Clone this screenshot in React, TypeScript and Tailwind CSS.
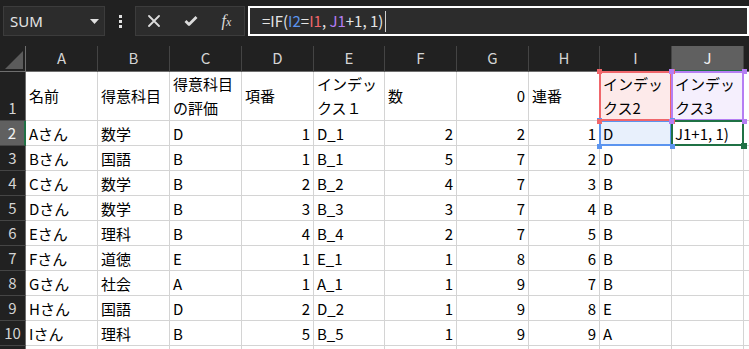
import React from 'react';

const widths = ['w-[72px]', 'w-[72px]', 'w-[72px]', 'w-[72px]', 'w-[71px]', 'w-[72px]', 'w-[72px]', 'w-[71px]', 'w-[72px]', 'w-[72px]'];
const letters = ['A', 'B', 'C', 'D', 'E', 'F', 'G', 'H', 'I', 'J'];

type Val = string | number;

const rows: Val[][] = [
  ['Aさん', '数学', 'D', 1, 'D_1', 2, 2, 1, 'D', 'J1+1, 1)'],
  ['Bさん', '国語', 'B', 1, 'B_1', 5, 7, 2, 'D', ''],
  ['Cさん', '数学', 'B', 2, 'B_2', 4, 7, 3, 'B', ''],
  ['Dさん', '数学', 'B', 3, 'B_3', 3, 7, 4, 'B', ''],
  ['Eさん', '理科', 'B', 4, 'B_4', 2, 7, 5, 'B', ''],
  ['Fさん', '道徳', 'E', 1, 'E_1', 1, 8, 6, 'B', ''],
  ['Gさん', '社会', 'A', 1, 'A_1', 1, 9, 7, 'B', ''],
  ['Hさん', '国語', 'D', 2, 'D_2', 1, 9, 8, 'E', ''],
  ['Iさん', '理科', 'B', 5, 'B_5', 1, 9, 9, 'A', ''],
  ['', '', '', '', '', '', '', '', '', ''],
];

// row 1 headers, wrapped by hand the way Excel wraps them
const head: { lines: string[]; right?: boolean }[] = [
  { lines: ['名前'] },
  { lines: ['得意科目'] },
  { lines: ['得意科目', 'の評価'] },
  { lines: ['項番'] },
  { lines: ['インデッ', 'クス１'] },
  { lines: ['数'] },
  { lines: ['0'], right: true },
  { lines: ['連番'] },
  { lines: ['インデッ', 'クス2'] },
  { lines: ['インデッ', 'クス3'] },
];

type Ref = { bg: string; line: string; dot: string; lz: string; dz: string; dots: boolean };

const refs: Record<string, Ref> = {
  I1: { bg: 'bg-[#fdeaea]', line: 'border-[#f0666b]', dot: 'bg-[#f0666b]', lz: 'z-[6]', dz: 'z-[12]', dots: true },
  J1: { bg: 'bg-[#f5effd]', line: 'border-[#b57ef3]', dot: 'bg-[#b57ef3]', lz: 'z-[7]', dz: 'z-[13]', dots: true },
  I2: { bg: 'bg-[#e8f0fc]', line: 'border-[#5b94ef]', dot: 'bg-[#5b94ef]', lz: 'z-[5]', dz: 'z-[11]', dots: true },
  J2: { bg: 'bg-white', line: 'border-[#1f7145]', dot: 'bg-[#1f7145]', lz: 'z-[8]', dz: 'z-[14]', dots: false },
};

const Mark: React.FC<{ r: Ref }> = ({ r }) => (
  <>
    <span className={`pointer-events-none absolute -left-px -top-px -right-px -bottom-px border-2 ${r.line} ${r.lz}`} />
    {r.dots ? (
      <>
        <span className={`absolute -left-[3px] -top-[3px] h-[5px] w-[5px] ${r.dot} ${r.dz}`} />
        <span className={`absolute -right-[4px] -top-[3px] h-[5px] w-[5px] ${r.dot} ${r.dz}`} />
        <span className={`absolute -left-[3px] -bottom-[4px] h-[5px] w-[5px] ${r.dot} ${r.dz}`} />
        <span className={`absolute -right-[4px] -bottom-[4px] h-[5px] w-[5px] ${r.dot} ${r.dz}`} />
      </>
    ) : (
      <span className={`absolute -right-[4px] -bottom-[4px] h-[6px] w-[6px] ${r.dot} ${r.dz}`} />
    )}
  </>
);

const ColHeader: React.FC = () => (
  <div className="flex h-[26px]">
    <div className="flex w-[26px] shrink-0 items-end justify-end border-r border-b border-[#6e6e6e] bg-[#212121] pr-[2px] pb-[2px]">
      <svg width="18" height="18" viewBox="0 0 18 18">
        <polygon points="0,18 18,18 18,0" fill="#5b5b5b" />
      </svg>
    </div>
    {letters.map((l, i) => (
      <div
        key={l}
        className={`${widths[i]} flex shrink-0 items-center justify-center border-r border-[#444] ${
          l === 'J' ? 'border-b-2 border-b-[#1f7145] bg-[#606060] text-[#f2f2f2]' : 'border-b border-b-[#6e6e6e] bg-[#212121] text-[#d4d4d4]'
        }`}
      >
        {l}
      </div>
    ))}
    <div className="flex-1 border-b border-[#6e6e6e] bg-[#212121]" />
  </div>
);

const RowHead: React.FC<{ n?: number; active?: boolean; tall?: boolean }> = ({ n, active, tall }) => (
  <div
    className={`flex w-[26px] shrink-0 items-end justify-center border-b border-[#454545] pb-[1px] leading-[22px] ${
      tall ? 'h-[49px]' : 'h-[25px]'
    } ${active ? 'border-r-2 border-r-[#1f7145] bg-[#606060] text-[#f2f2f2]' : 'border-r border-r-[#6e6e6e] bg-[#212121] text-[#d4d4d4]'}`}
  >
    {n}
  </div>
);

const FormulaBar: React.FC = () => (
  <div className="flex h-[46px] items-start bg-[#212121] pt-[6px] font-['Noto_Sans',sans-serif] text-[15px] text-[#e4e4e4]">
    <div className="ml-[3px] flex h-[30px] w-[102px] items-center justify-between border border-[#3c3c3c] bg-[#2c2c2c] pr-[5px] pl-[6px]">
      <span>SUM</span>
      <svg width="9" height="5" viewBox="0 0 9 5">
        <polygon points="0,0 9,0 4.5,5" fill="#e0e0e0" />
      </svg>
    </div>
    <div className="flex h-[30px] w-[30px] items-center justify-center">
      <svg width="3" height="13" viewBox="0 0 3 13" fill="#e0e0e0">
        <rect x="0" y="0" width="3" height="3" />
        <rect x="0" y="5" width="3" height="3" />
        <rect x="0" y="10" width="3" height="3" />
      </svg>
    </div>
    <div className="flex h-[30px] w-[110px] items-center border border-[#3c3c3c] bg-[#2c2c2c]">
      <span className="flex w-[36px] justify-center">
        <svg width="12" height="12" viewBox="0 0 12 12" stroke="#dcdcdc" strokeWidth="1.8" strokeLinecap="round">
          <path d="M1 1 L11 11 M11 1 L1 11" />
        </svg>
      </span>
      <span className="flex w-[37px] justify-center">
        <svg width="14" height="12" viewBox="0 0 14 12" fill="none" stroke="#dcdcdc" strokeWidth="2.8" strokeLinejoin="round">
          <path d="M1.5 6 L5 9.5 L12.5 2" />
        </svg>
      </span>
      <span className="flex w-[35px] items-baseline justify-center font-['Liberation_Serif',serif] italic leading-none text-[#dcdcdc]">
        <span className="text-[16px]">f</span>
        <span className="text-[12px]">x</span>
      </span>
    </div>
    <div className="ml-[3px] flex h-[30px] flex-1 items-center border-2 border-white bg-[#2c2c2c] pl-[12px] font-['Noto_Sans_CJK_JP',sans-serif]">
      <span>=IF(</span>
      <span className="text-[#5b94ef]">I2</span>
      <span>=</span>
      <span className="text-[#f0666b]">I1</span>
      <span className="whitespace-pre">, </span>
      <span className="text-[#b57ef3]">J1</span>
      <span className="whitespace-pre">+1, 1)</span>
      <span className="ml-[2px] h-[21px] w-px bg-[#cfcfcf]" />
    </div>
  </div>
);

export default function App() {
  return (
    <div className="h-[349px] w-[749px] overflow-hidden bg-[#212121] font-['Noto_Sans_CJK_JP',sans-serif] text-[15px]">
      <FormulaBar />
      <ColHeader />

      <div className="flex">
        <RowHead n={1} tall />
        {head.map((h, i) => {
          const r = i === 8 ? refs.I1 : i === 9 ? refs.J1 : undefined;
          return (
            <div
              key={i}
              className={`${widths[i]} relative flex h-[49px] shrink-0 flex-col justify-center border-r border-b border-[#d4d4d4] px-[3px] leading-[24px] text-black ${
                r ? r.bg : 'bg-white'
              } ${h.right ? 'items-end' : 'items-start'}`}
            >
              {h.lines.map((t) => (
                <span key={t} className="whitespace-nowrap">
                  {t}
                </span>
              ))}
              {r && <Mark r={r} />}
            </div>
          );
        })}
        <div className="h-[49px] flex-1 border-b border-[#d4d4d4] bg-white" />
      </div>

      {rows.map((row, ri) => (
        <div key={ri} className="flex">
          {/* row 11 only peeks in at the bottom edge, its number is not visible */}
          <RowHead n={ri < 9 ? ri + 2 : undefined} active={ri === 0} />
          {row.map((v, ci) => {
            const r = ri === 0 && ci === 8 ? refs.I2 : ri === 0 && ci === 9 ? refs.J2 : undefined;
            const num = typeof v === 'number';
            return (
              <div
                key={ci}
                className={`${widths[ci]} relative flex h-[25px] shrink-0 border-r border-b border-[#d4d4d4] px-[3px] pt-[2px] leading-[22px] whitespace-nowrap text-black ${
                  r ? r.bg : 'bg-white'
                } ${num ? 'justify-end' : 'justify-start'}`}
              >
                {v}
                {r && <Mark r={r} />}
              </div>
            );
          })}
          <div className="h-[25px] flex-1 border-b border-[#d4d4d4] bg-white" />
        </div>
      ))}
    </div>
  );
}
